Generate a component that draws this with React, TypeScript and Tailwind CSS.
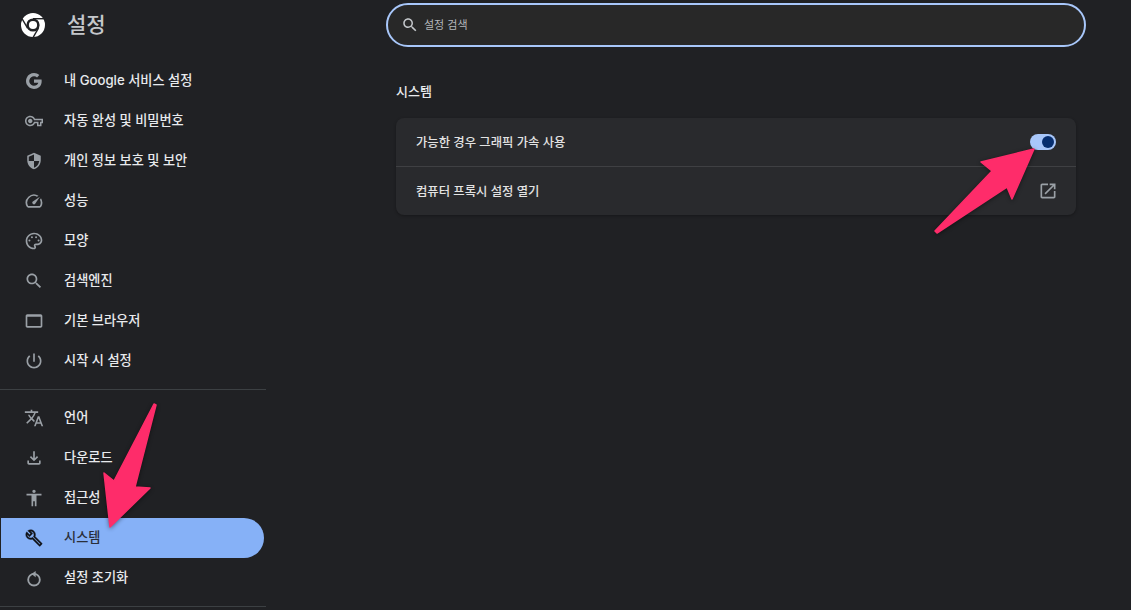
import type { ReactNode } from "react";

const FONT = "font-['Inter','Noto_Sans_CJK_KR',sans-serif]";

/** Material-style icon on a 24 box. Colour comes from the row around it. */
function Icon({ d, size = 20, className = "", children }: { d?: string; size?: number; className?: string; children?: ReactNode }) {
  return (
    <svg width={size} height={size} viewBox="0 0 24 24" fill="currentColor" className={`shrink-0 ${className}`}>
      {d ? <path d={d} /> : null}
      {children}
    </svg>
  );
}

function GoogleG() {
  return (
    <svg width={16} height={16} viewBox="0 0 18 18" fill="currentColor" className="mx-[2px] shrink-0">
      <path d="M17.64 9.2c0-.637-.057-1.251-.164-1.84H9v3.481h4.844c-.209 1.125-.843 2.078-1.796 2.717v2.258h2.908c1.702-1.567 2.684-3.874 2.684-6.615z" />
      <path d="M9 18c2.43 0 4.467-.806 5.956-2.18l-2.908-2.259c-.806.54-1.837.86-3.048.86-2.344 0-4.328-1.584-5.036-3.711H.957v2.332C2.438 15.983 5.482 18 9 18z" />
      <path d="M3.964 10.71c-.18-.54-.282-1.117-.282-1.71s.102-1.17.282-1.71V4.958H.957C.347 6.173 0 7.548 0 9s.348 2.827.957 4.042l3.007-2.332z" />
      <path d="M9 3.58c1.321 0 2.508.454 3.44 1.345l2.582-2.58C13.463.891 11.426 0 9 0 5.482 0 2.438 2.017.957 4.958L3.964 7.29C4.672 5.163 6.656 3.58 9 3.58z" />
    </svg>
  );
}

/** Single-colour Chrome mark: white disc, dark ring, three tangent slits. */
function ChromeLogo() {
  return (
    <svg width={24} height={24} viewBox="0 0 24 24" className="shrink-0">
      <circle cx="12" cy="12" r="12" fill="#fff" />
      <circle cx="12" cy="12" r="6.6" fill="#202124" />
      <circle cx="12" cy="12" r="4.1" fill="#fff" />
      <g stroke="#202124" strokeWidth="1.4">
        <path d="M12 5.7H24" />
        <path d="M12 5.7H24" transform="rotate(120 12 12)" />
        <path d="M12 5.7H24" transform="rotate(240 12 12)" />
      </g>
    </svg>
  );
}

const SEARCH =
  "M15.5 14h-.79l-.28-.27C15.41 12.59 16 11.11 16 9.5 16 5.91 13.09 3 9.5 3S3 5.91 3 9.5 5.91 16 9.5 16c1.61 0 3.09-.59 4.23-1.57l.27.28v.79l5 4.99L20.49 19l-4.99-5zm-6 0C7.01 14 5 11.99 5 9.5S7.01 5 9.5 5 14 7.01 14 9.5 11.99 14 9.5 14z";

const ICONS = {
  key: "M22 19h-6v-4h-2.68c-1.14 2.42-3.6 4-6.32 4-3.86 0-7-3.14-7-7s3.14-7 7-7c2.72 0 5.17 1.58 6.32 4H24v6h-2v4zm-4-2h2v-4h2v-2H11.94l-.23-.67C11.01 8.34 9.11 7 7 7c-2.76 0-5 2.24-5 5s2.24 5 5 5c2.11 0 4.01-1.34 4.71-3.33l.23-.67H18v4zM7 15c-1.65 0-3-1.35-3-3s1.35-3 3-3 3 1.35 3 3-1.35 3-3 3z",
  shield: "M12 1L3 5v6c0 5.55 3.84 10.74 9 12 5.16-1.26 9-6.45 9-12V5l-9-4zm0 10.99h7c-.53 4.12-3.28 7.79-7 8.94V12H5V6.3l7-3.11v8.8z",
  speed: "M20.38 8.57l-1.23 1.85a8 8 0 0 1-.22 7.58H5.07A8 8 0 0 1 15.58 6.85l1.85-1.23A10 10 0 0 0 3.35 19a2 2 0 0 0 1.72 1h13.85a2 2 0 0 0 1.74-1 10 10 0 0 0-.27-10.44zm-9.79 6.84a2 2 0 0 0 2.83 0l5.66-8.49-8.49 5.66a2 2 0 0 0 0 2.83z",
  browser: "M20 4H4c-1.1 0-2 .9-2 2v12c0 1.1.9 2 2 2h16c1.1 0 2-.9 2-2V6c0-1.1-.9-2-2-2zm0 14H4V7h16v11z",
  power: "M13 3h-2v10h2V3zm4.83 2.17l-1.42 1.42C17.99 7.86 19 9.81 19 12c0 3.87-3.13 7-7 7s-7-3.13-7-7c0-2.19 1.01-4.14 2.58-5.42L6.17 5.17C4.23 6.82 3 9.26 3 12c0 4.97 4.03 9 9 9s9-4.03 9-9c0-2.74-1.23-5.18-3.17-6.83z",
  translate: "M12.87 15.07l-2.54-2.51.03-.03c1.74-1.94 2.98-4.17 3.71-6.53H17V4h-7V2H8v2H1v1.99h11.17C11.5 7.92 10.44 9.75 9 11.35 8.07 10.32 7.3 9.19 6.69 8h-2c.73 1.63 1.73 3.17 2.98 4.56l-5.09 5.02L4 19l5-5 3.11 3.11.76-2.04zM18.5 10h-2L12 22h2l1.12-3h4.75L21 22h2l-4.5-12zm-2.62 7l1.62-4.33L19.12 17h-3.24z",
  download: "M18 15v3H6v-3H4v3c0 1.1.9 2 2 2h12c1.1 0 2-.9 2-2v-3h-2zm-1-4l-1.41-1.41L13 12.17V4h-2v8.17L8.41 9.59 7 11l5 5 5-5z",
  access: "M12 2c1.1 0 2 .9 2 2s-.9 2-2 2-2-.9-2-2 .9-2 2-2zm9 7h-6v13h-2v-6h-2v6H9V9H3V7h18v2z",
  build: "M22.61 18.99l-9.08-9.08c.93-2.34.45-5.1-1.44-7C9.79.61 6.21.4 3.66 2.26L7.5 6.11 6.08 7.52 2.25 3.69C.39 6.23.6 9.82 2.9 12.11c1.86 1.86 4.57 2.35 6.89 1.48l9.11 9.11c.39.39 1.02.39 1.41 0l2.3-2.3c.4-.38.4-1.01 0-1.41zm-3 1.6l-9.46-9.46c-.61.45-1.29.72-2 .82-1.36.2-2.79-.21-3.83-1.25C3.37 9.76 2.93 8.5 3 7.26l3.09 3.09 4.24-4.24-3.09-3.09c1.24-.07 2.49.37 3.44 1.31 1.08 1.08 1.49 2.57 1.24 3.96-.12.71-.42 1.37-.88 1.96l9.45 9.45-.88.89z",
  open: "M19 19H5V5h7V3H5c-1.11 0-2 .9-2 2v14c0 1.1.89 2 2 2h14c1.1 0 2-.9 2-2v-7h-2v7zM14 3v2h3.59l-9.83 9.83 1.41 1.41L19 6.41V10h2V3h-7z",
};

function Palette() {
  return (
    <Icon d="M12 22C6.49 22 2 17.51 2 12S6.49 2 12 2s10 4.04 10 9c0 3.31-2.69 6-6 6h-1.77c-.28 0-.5.22-.5.5 0 .12.05.23.13.33.41.47.64 1.06.64 1.67 0 1.38-1.12 2.5-2.5 2.5zm0-18c-4.41 0-8 3.59-8 8s3.59 8 8 8c.28 0 .5-.22.5-.5 0-.16-.08-.28-.14-.35-.41-.46-.63-1.05-.63-1.65 0-1.38 1.12-2.5 2.5-2.5H16c2.21 0 4-1.79 4-4 0-3.86-3.59-7-8-7z">
      <circle cx="6.5" cy="11.5" r="1.2" />
      <circle cx="9.5" cy="7.5" r="1.2" />
      <circle cx="14.5" cy="7.5" r="1.2" />
      <circle cx="17.5" cy="11.5" r="1.2" />
    </Icon>
  );
}

function ResetIcon() {
  return (
    <Icon>
      <circle cx="12" cy="14" r="7" fill="none" stroke="currentColor" strokeWidth="2.2" />
      <path d="M14 3.5v7.5L9 7.25z" />
    </Icon>
  );
}

function NavRow({ icon, label, active }: { icon: ReactNode; label: string; active?: boolean }) {
  return (
    <div
      className={
        active
          ? "ml-[1px] flex h-10 w-[263px] items-center gap-5 rounded-r-full bg-[#86b1f7] pl-[23px] text-[#111317]"
          : "flex h-10 w-[264px] items-center gap-5 pl-6 text-[#9aa0a6]"
      }
    >
      {icon}
      <span className={active ? "text-[13.2px] font-medium text-[#2a2f3a]" : "text-[13.2px] font-medium text-[#e8eaed]"}>{label}</span>
    </div>
  );
}

/** The two pink annotation arrows lie on top of the page. */
function Arrows() {
  return (
    <svg width={1131} height={610} viewBox="0 0 1131 610" className="pointer-events-none absolute top-0 left-0">
      <g fill="#fe2c6a" stroke="#fe2c6a" strokeWidth="1.5" strokeLinejoin="round" className="drop-shadow-[0_1px_2px_rgba(0,0,0,0.45)]">
        <polygon points="154,404 156,405 135,487 150,488 110,527 104,473 114,481" />
        <polygon points="1034,149 1012,199 1007,187 937,233 935,231 992,171 981,162" />
      </g>
    </svg>
  );
}

export default function App() {
  return (
    <div className={`relative flex h-[610px] w-[1131px] overflow-hidden bg-[#202124] ${FONT}`}>
      <aside className="flex w-[266px] shrink-0 flex-col">
        <div className="flex h-[61px] items-start pl-[21px] pt-[13px]">
          <ChromeLogo />
          <span className="ml-[22px] text-[21px] leading-6 font-medium text-[#c4c7cb]">설정</span>
        </div>
        <NavRow icon={<GoogleG />} label="내 Google 서비스 설정" />
        <NavRow icon={<Icon d={ICONS.key} size={18} className="mx-px" />} label="자동 완성 및 비밀번호" />
        <NavRow icon={<Icon d={ICONS.shield} size={18} className="mx-px" />} label="개인 정보 보호 및 보안" />
        <NavRow icon={<Icon d={ICONS.speed} />} label="성능" />
        <NavRow icon={<Palette />} label="모양" />
        <NavRow icon={<Icon d={SEARCH} />} label="검색엔진" />
        <NavRow icon={<Icon d={ICONS.browser} />} label="기본 브라우저" />
        <NavRow icon={<Icon d={ICONS.power} />} label="시작 시 설정" />
        <div className="mt-2 mb-2 h-px bg-[#3c4043]" />
        <NavRow icon={<Icon d={ICONS.translate} />} label="언어" />
        <NavRow icon={<Icon d={ICONS.download} />} label="다운로드" />
        <NavRow icon={<Icon d={ICONS.access} />} label="접근성" />
        <NavRow icon={<Icon d={ICONS.build} size={18} className="mx-px stroke-current stroke-[0.5]" />} label="시스템" active />
        <NavRow icon={<ResetIcon />} label="설정 초기화" />
        <div className="mt-2 h-px bg-[#3c4043]" />
      </aside>

      <main className="flex-1 pt-[3px]">
        <div className="ml-[120px] flex h-[44px] w-[700px] items-center gap-[5px] rounded-full border-2 border-[#a8c7fa] bg-[#282828] pl-[13px] text-[#c4c7cb]">
          <Icon d={SEARCH} size={18} />
          <span className="text-[11px] text-[#b4b7bb]">설정 검색</span>
        </div>

        <h2 className="mt-[34px] ml-[130px] text-[13px] leading-5 font-medium text-[#e8eaed]">시스템</h2>

        <section className="mt-[17px] ml-[130px] w-[680px] rounded-lg bg-[#292a2d] shadow-[0_1px_3px_rgba(0,0,0,0.3)]">
          <div className="flex h-12 items-center justify-between pr-5 pl-5">
            <span className="pt-[2px] text-[12.35px] font-medium text-[#e3e3e3]">가능한 경우 그래픽 가속 사용</span>
            <span className="flex h-4 w-[26px] items-center justify-end rounded-full bg-[#a8c7fa] pr-[2px]">
              <span className="h-3 w-3 rounded-full bg-[#062e6f]" />
            </span>
          </div>
          <div className="flex h-[49px] items-center justify-between border-t border-[#3f4043] pr-[18px] pl-5 text-[#9aa0a6]">
            <span className="pt-[2px] text-[12.35px] font-medium text-[#e3e3e3]">컴퓨터 프록시 설정 열기</span>
            <Icon d={ICONS.open} />
          </div>
        </section>
      </main>

      <Arrows />
    </div>
  );
}
